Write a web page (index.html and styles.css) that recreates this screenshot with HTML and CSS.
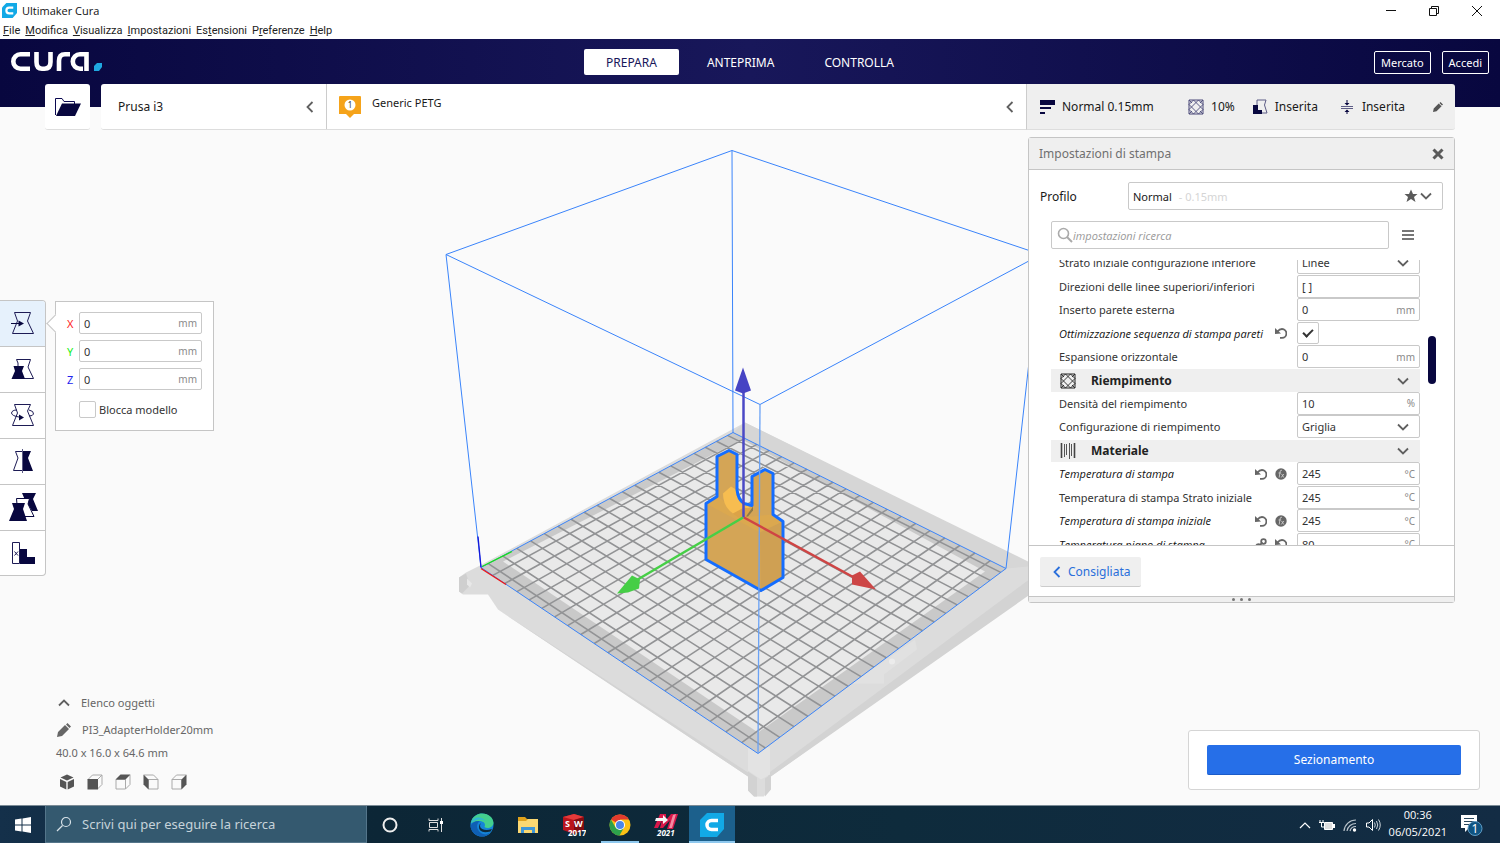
FILE: index.html
```html
<!DOCTYPE html>
<html lang="it">
<head>
    <meta charset="UTF-8">
    <meta name="viewport" content="width=device-width, initial-scale=1.0">
    <title>Ultimaker Cura</title>
    <link rel="stylesheet" href="styles.css">
</head>
<body>
    <!-- Shared icons -->
    <svg class="sprite" aria-hidden="true">
        <symbol id="i-cura" viewBox="0 0 24 24">
            <path d="M7 0H24V16L17 24H0V7Z" fill="#12a9e6"/>
            <path d="M18 7.500H11.500A4.500 4.500 0 0 0 11.500 16.500H18" fill="none" stroke="#fff" stroke-width="3.500"/>
        </symbol>
        <symbol id="i-down" viewBox="0 0 12 12"><path d="M1 3.500L6 8.500L11 3.500" fill="none" stroke="currentColor" stroke-width="1.800"/></symbol>
        <symbol id="i-left" viewBox="0 0 12 12"><path d="M8.500 1L3.500 6L8.500 11" fill="none" stroke="currentColor" stroke-width="1.800"/></symbol>
        <symbol id="i-undo" viewBox="0 0 12 12">
            <path d="M2.500 4.500Q4.500 2 7 2A4.300 4.300 0 0 1 7 10.800H5" fill="none" stroke="currentColor" stroke-width="1.800"/>
            <path d="M0 1V7L6 6.500Z" fill="currentColor"/>
        </symbol>
        <symbol id="i-fx" viewBox="0 0 12 12">
            <circle cx="6" cy="6" r="5.700" fill="currentColor"/>
            <path d="M7 2.200Q5.300 1.800 5 4L4.200 9.500M3.500 5H6.200M6.600 6L8.800 9.500M8.800 6L6.200 9.500" fill="none" stroke="#ccc" stroke-width="0.900"/>
        </symbol>
        <symbol id="i-link" viewBox="0 0 12 12">
            <g fill="none" stroke="currentColor" stroke-width="1.800"><circle cx="8.500" cy="3.500" r="2.300"/><circle cx="3.500" cy="8.500" r="2.300"/><path d="M4.500 7.500L7.500 4.500"/></g>
        </symbol>
        <symbol id="i-pencil" viewBox="0 0 14 14">
            <path d="M0 14L1 9L8 2L12 6L5 13ZM9 1.500L10.500 0L14 3.500L12.500 5Z" fill="currentColor"/>
        </symbol>
        <symbol id="i-infill" viewBox="0 0 16 16">
            <path d="M1 1H15V15H1Z" fill="none" stroke="currentColor"/>
            <path d="M1 5.500L5.500 1M1 10.500L10.500 1M5.500 15L15 5.500M10.500 15L15 10.500M10.500 1L15 5.500M5.500 1L15 10.500M1 5.500L10.500 15M1 10.500L5.500 15" fill="none" stroke="currentColor" stroke-width="0.900"/>
            <path d="M1 1L4 4M15 1L12 4M1 15L4 12M15 15L12 12" stroke="currentColor" stroke-width="0.900"/>
        </symbol>
        <symbol id="i-search" viewBox="0 0 16 16"><circle cx="6.500" cy="6.500" r="5" fill="none" stroke="currentColor" stroke-width="1.600"/><path d="M10 10L15 15" stroke="currentColor" stroke-width="2"/></symbol>
    </svg>

    <div class="titlebar">
        <svg class="app-icon"><use href="#i-cura"/></svg>
        <h1>Ultimaker Cura</h1>
        <div class="window-controls">
            <button type="button" aria-label="Riduci"><svg width="12" height="12"><path d="M1 5.500H11" stroke="#111"/></svg></button>
            <button type="button" aria-label="Ripristina"><svg width="12" height="12"><path d="M3.500 3.500V1.500H10.500V8.500H8.500M1.500 3.500H8.500V10.500H1.500Z" fill="none" stroke="#111"/></svg></button>
            <button type="button" aria-label="Chiudi"><svg width="12" height="12"><path d="M1 1L11 11M11 1L1 11" stroke="#111"/></svg></button>
        </div>
    </div>
    <nav class="menubar">
        <a href="#"><u>F</u>ile</a>
        <a href="#"><u>M</u>odifica</a>
        <a href="#"><u>V</u>isualizza</a>
        <a href="#"><u>I</u>mpostazioni</a>
        <a href="#">Es<u>t</u>ensioni</a>
        <a href="#">P<u>r</u>eferenze</a>
        <a href="#"><u>H</u>elp</a>
    </nav>

    <header class="topbar">
        <svg class="logo" width="92" height="20" viewBox="0 0 92 20" role="img" aria-label="cura">
            <g fill="none" stroke="#fff" stroke-width="4.600">
                <path d="M19 2.300H9.500A7 7 0 0 0 9.500 16.700H19"/>
                <path d="M25.500 0V10Q25.500 16.700 31 16.700H33.500Q39.500 16.700 39.500 10V0"/>
                <path d="M48 19V9Q48 2.300 54 2.300H59"/>
                <path d="M75.500 19V2.300H69A7 7 0 0 0 69 16.700H72"/>
            </g>
            <path d="M86 11H91V15L88 19H83V14Z" fill="#1fa8e0"/>
        </svg>
        <nav class="stages">
            <button type="button" class="active">PREPARA</button>
            <button type="button">ANTEPRIMA</button>
            <button type="button">CONTROLLA</button>
        </nav>
        <div class="account">
            <button type="button">Mercato</button>
            <button type="button">Accedi</button>
        </div>
    </header>

    <main>
        <svg class="scene" viewBox="0 84 1500 722" preserveAspectRatio="xMidYMid slice" aria-hidden="true">
            <!-- printer frame -->
            <path d="M480 566L745 423L1050 575V588L1018 600L768 779V790L764 797H754L748 791V777L498 610L488 595H463L459 592V578L466 573Z" fill="#dcdcdc"/>
            <path d="M498 610L748 773V777L495 608ZM768 774L1040 572V588L768 779Z" fill="#d3d3d3"/>
            <path d="M459 578L466 574L470 586L462 594L459 592Z" fill="#cfcfcf"/>
            <path d="M467 579L472 584L470 588L467 585Z" fill="#e8e8e8"/>
            <path d="M745 423L1028 562V567L1006 569L733 433Z" fill="#d6d6d6"/>
            <path d="M748 748H770V775L761 780L748 771Z" fill="#e3e3e3"/>
            <path d="M748 772L757 778V797H754L748 791ZM765 779L771 775V790L765 797Z" fill="#d2d2d2"/>
            <path d="M852 684L915 640L917 650L884 675V684Z" fill="#e1e1e1"/>
            <circle cx="892" cy="662" r="3" fill="#ececec"/>
            <path d="M481 568L733 433L1006 569L758 754Z" fill="#c9c9c9"/>
            <path d="M503 562L742 440L985 572L758 733Z" fill="#e9e9e9"/>
            <path id="grid" fill="none" stroke="#929395" stroke-width="1.600"/>

            <!-- build volume -->
            <g fill="none" stroke="#3a84fa">
                <path d="M481 568L733 433L1006 569L758 754Z"/>
                <path d="M446 255L732 151L1041 255L760 405Z"/>
                <path d="M481 568L446 255M733 433L732 151M1006 569L1041 255"/>
            </g>
            <path d="M481 569L506 585" stroke="#f01515" stroke-width="1.300"/>
            <path d="M482 567L512 552" stroke="#18e018" stroke-width="1.300"/>
            <path d="M481 568L478 537" stroke="#1515d8" stroke-width="1.300"/>

            <!-- model -->
            <path d="M706 560V504L718 497V457L729 451L736 455V490Q737 500 744 504L753 506V477L765 470L772 474V515L783 522V578L761 591Z" fill="#d4a556"/>
            <path d="M706 504L718 497L743 518L772 515L783 522L760 533Z" fill="#dba84f"/>
            <path d="M760 533L783 522V578L761 591Z" fill="#cfa053"/>
            <path d="M723 494L731 487L736 490Q739 501 750 508L733 514Q723 507 723 494Z" fill="#f7bd50"/>
            <path d="M733 514L744 508L753 510L746 518H738Z" fill="#dca347"/>
            <path d="M746 517L753 507V511L748 517Z" fill="#8f7a48"/>
            <path d="M706 560V504L717 497V457L729 451L737 455V490Q738 500 744 504L752 506V477L765 470L773 474V515L783 522V578L761 591Z" fill="none" stroke="#146dff" stroke-width="3" stroke-linejoin="round"/>
            <path d="M760 405L758 754" stroke="#6aa2f5" stroke-width="1.300"/>

            <!-- move handles -->
            <path d="M743.500 518V390" stroke="#4b49c6" stroke-width="2.500"/>
            <path d="M743 368L735 391L743 394L751 391Z" fill="#4644c4"/>
            <path d="M743 518L636 581" stroke="#46cf46" stroke-width="2.500"/>
            <path d="M617 594L632 576L640 580L639 589L628 593Z" fill="#46ce46"/>
            <path d="M744 518L854 578" stroke="#cf4444" stroke-width="2.500"/>
            <path d="M876 590L860 572L852 576V585Z" fill="#cd4646"/>
        </svg>

        <div class="stagebar">
            <button type="button" class="open" aria-label="Apri file">
                <svg width="28" height="20"><path d="M1.500 18V1.500H8L10 4.500H20.500V7" fill="none" stroke="#0a0850"/><path d="M8 6.500H27L21 19H2Z" fill="#08073f"/></svg>
            </button>
            <div class="stage-menu">
                <button type="button" class="printer"><span>Prusa i3</span><svg class="chev"><use href="#i-left"/></svg></button>
                <button type="button" class="material">
                    <svg width="24" height="24"><path d="M2 1H22Q23 1 23 2V19H16L12 23L8 19H1V2Q1 1 2 1Z" fill="#f5a31a"/><circle cx="12" cy="10" r="5.500" fill="#fff"/><text x="12" y="13" text-anchor="middle" class="badge-text">1</text></svg>
                    <span>Generic PETG</span>
                    <svg class="chev"><use href="#i-left"/></svg>
                </button>
                <button type="button" class="summary">
                    <svg width="16" height="16"><path d="M1 1H16V6H1ZM1 8H12V10H1ZM1 13H6V15H1Z" fill="#08073f"/></svg>
                    <span class="profile-name">Normal 0.15mm</span>
                    <svg class="navy" width="16" height="16"><use href="#i-infill"/></svg>
                    <span class="infill">10%</span>
                    <svg width="16" height="16"><path d="M5 1H14L12.500 6L15 14H10" fill="none" stroke="#5d5c86"/><path d="M5 1V6" stroke="#5d5c86"/><path d="M1 6H6V11H10V15H1Z" fill="#08073f"/></svg>
                    <span class="support">Inserita</span>
                    <svg width="16" height="16"><path d="M2 7.500H14M2 9.500H14" stroke="#5d5c86"/><path d="M8 1V5M8 11V15" stroke="#08073f"/><path d="M5.500 4H10.500L8 6.500ZM5.500 13H10.500L8 10.500Z" fill="#08073f"/></svg>
                    <span>Inserita</span>
                    <svg class="edit" width="10" height="10"><use href="#i-pencil"/></svg>
                </button>
            </div>
        </div>

        <div class="middle">
            <div class="tools">
                <button type="button" class="selected" aria-label="Sposta">
                    <svg width="24" height="24"><path d="M3.500 1.500H19.500L16.500 10L22.500 22.500H1.500L6.500 10Z" class="line"/><path d="M0 12.500H9" stroke="#08073f"/><path d="M7.500 9.500L13 12.500L7.500 15.500Z" class="solid"/></svg>
                </button>
                <button type="button" aria-label="Scala">
                    <svg width="24" height="24"><path d="M7 9V6L5.500 2.500H19.500L17 10L22.500 21.500H12" class="line"/><path d="M2.500 9H13L11 14L14 22H0.500L4 14Z" class="solid"/></svg>
                </button>
                <button type="button" aria-label="Ruota">
                    <svg width="24" height="24"><path d="M3.500 1.500H19.500L16.500 8L22.500 22.500H1.500L6.500 10Z" class="line"/><path d="M6 7Q1 7 0.500 10Q1 13 8 14M18 7Q23 8 22.500 11Q22 13 18 13" class="line"/><path d="M8 11.500L13 14.500L8 17.500Z" class="solid"/></svg>
                </button>
                <button type="button" aria-label="Specchia">
                    <svg width="24" height="24"><path d="M11 2.500H4.500L7 9L2.500 21.500H11" class="line"/><path d="M12 2H20L17 9L22 22H12Z" class="solid"/><path d="M11.500 0V24" stroke="#5d5c86"/></svg>
                </button>
                <button type="button" aria-label="Impostazioni per modello">
                    <svg width="30" height="30"><path d="M14 1H28L25 7L30 19H24L17 8Z" class="solid"/><path d="M8.500 6.500H21.500L20 12L26 24.500H10Z" fill="#fff" stroke="#08073f"/><path d="M4 11H17L15 17L19 29H1L6 17Z" class="solid"/></svg>
                </button>
                <button type="button" aria-label="Blocco supporto">
                    <svg width="24" height="24"><path d="M9 8H16V16H24V23H9Z" class="solid"/><path d="M1.500 1.500H8.500V22.500H1.500ZM3.500 10.500L7 14.500M7 10.500L3.500 14.500" class="line"/></svg>
                </button>
            </div>
            <form class="move-panel">
                <div class="axis x"><label for="pos-x">X</label><span class="field"><input id="pos-x" type="text" value="0"><span class="unit">mm</span></span></div>
                <div class="axis y"><label for="pos-y">Y</label><span class="field"><input id="pos-y" type="text" value="0"><span class="unit">mm</span></span></div>
                <div class="axis z"><label for="pos-z">Z</label><span class="field"><input id="pos-z" type="text" value="0"><span class="unit">mm</span></span></div>
                <div class="lock"><input id="lock" type="checkbox"><label for="lock">Blocca modello</label></div>
            </form>

            <section class="settings">
                <div class="settings-head">
                    <h2>Impostazioni di stampa</h2>
                    <button type="button" aria-label="Chiudi impostazioni"><svg width="12" height="12"><path d="M1.500 1.500L10.500 10.500M10.500 1.500L1.500 10.500" stroke="#5a5a5a" stroke-width="3"/></svg></button>
                </div>
                <div class="profile">
                    <span id="profile-label">Profilo</span>
                    <button type="button" class="profile-select" aria-labelledby="profile-label">
                        <span>Normal</span><span class="faint">- 0.15mm</span>
                        <svg class="star" width="14" height="14"><path d="M7 0.500L9 5H13.500L10 8L11.500 13L7 10L2.500 13L4 8L0.500 5H5Z" fill="#5a5a5a"/></svg>
                        <svg class="chev"><use href="#i-down"/></svg>
                    </button>
                </div>
                <div class="search">
                    <div class="search-box">
                        <svg width="16" height="16"><use href="#i-search"/></svg>
                        <input type="text" placeholder="impostazioni ricerca" aria-label="impostazioni ricerca">
                    </div>
                    <button type="button" aria-label="Visibilità impostazioni"><svg width="12" height="12"><path d="M0 2H12M0 6H12M0 10H12" stroke="#4a4a4a" stroke-width="1.500"/></svg></button>
                </div>
                <div class="list-wrap">
                    <div class="list">
                        <div class="row"><label for="s1">Strato iniziale configurazione inferiore</label><span class="field"><select id="s1"><option>Linee</option></select><svg class="chev"><use href="#i-down"/></svg></span></div>
                        <div class="row"><label for="s2">Direzioni delle linee superiori/inferiori</label><span class="field"><input id="s2" type="text" value="[ ]"></span></div>
                        <div class="row"><label for="s3">Inserto parete esterna</label><span class="field"><input id="s3" type="text" value="0"><span class="unit">mm</span></span></div>
                        <div class="row changed"><label for="s4">Ottimizzazione sequenza di stampa pareti</label><svg class="mark"><use href="#i-undo"/></svg><span class="check"><input id="s4" type="checkbox" checked></span></div>
                        <div class="row"><label for="s5">Espansione orizzontale</label><span class="field"><input id="s5" type="text" value="0"><span class="unit">mm</span></span></div>
                        <button type="button" class="category"><svg width="16" height="16"><use href="#i-infill"/></svg><span>Riempimento</span><svg class="chev"><use href="#i-down"/></svg></button>
                        <div class="row"><label for="s6">Densità del riempimento</label><span class="field"><input id="s6" type="text" value="10"><span class="unit">%</span></span></div>
                        <div class="row"><label for="s7">Configurazione di riempimento</label><span class="field"><select id="s7"><option>Griglia</option></select><svg class="chev"><use href="#i-down"/></svg></span></div>
                        <button type="button" class="category"><svg width="16" height="16"><path d="M1.500 0V15M14.500 0V15" stroke="#444" stroke-width="1.600"/><path d="M4.500 1V14M6.500 1V12M9.500 0V16M11.500 1V13" stroke="#555"/></svg><span>Materiale</span><svg class="chev"><use href="#i-down"/></svg></button>
                        <div class="row changed"><label for="s8">Temperatura di stampa</label><svg class="mark"><use href="#i-undo"/></svg><svg class="mark"><use href="#i-fx"/></svg><span class="field"><input id="s8" type="text" value="245"><span class="unit">°C</span></span></div>
                        <div class="row"><label for="s9">Temperatura di stampa Strato iniziale</label><span class="field"><input id="s9" type="text" value="245"><span class="unit">°C</span></span></div>
                        <div class="row changed"><label for="s10">Temperatura di stampa iniziale</label><svg class="mark"><use href="#i-undo"/></svg><svg class="mark"><use href="#i-fx"/></svg><span class="field"><input id="s10" type="text" value="245"><span class="unit">°C</span></span></div>
                        <div class="row changed"><label for="s11">Temperatura piano di stampa</label><svg class="mark"><use href="#i-link"/></svg><svg class="mark"><use href="#i-undo"/></svg><span class="field"><input id="s11" type="text" value="80"><span class="unit">°C</span></span></div>
                    </div>
                    <div class="scroll-thumb"></div>
                </div>
                <div class="settings-foot">
                    <button type="button"><svg class="chev"><use href="#i-left"/></svg>Consigliata</button>
                </div>
                <div class="drag"><i></i><i></i><i></i></div>
            </section>
        </div>

        <div class="bottom">
            <div class="objects">
                <button type="button" class="toggle"><svg class="chev up"><use href="#i-down"/></svg>Elenco oggetti</button>
                <div class="object-name"><svg width="14" height="14"><use href="#i-pencil"/></svg><span>PI3_AdapterHolder20mm</span></div>
                <p>40.0 x 16.0 x 64.6 mm</p>
                <div class="views">
                    <button type="button" aria-label="Vista 3D"><svg width="16" height="16"><path d="M8 0.500L14.500 3.500L8 6.500L1.500 3.500ZM1 5L7.300 8V15.500L1 12.500ZM15 5L8.700 8V15.500L15 12.500Z" fill="#555"/></svg></button>
                    <button type="button" aria-label="Vista frontale"><svg width="16" height="16"><path d="M1 5.500L5.500 1H15V10.500L10.500 15M10.500 5.500L15 1" class="cube"/><path d="M0.500 5H11V15.500H0.500Z" fill="#555"/></svg></button>
                    <button type="button" aria-label="Vista superiore"><svg width="16" height="16"><path d="M1 5.500H10.500V15H1ZM15 1V10.500L10.500 15" class="cube"/><path d="M0.500 5.500L5.500 0.500H15.500L10.500 5.500Z" fill="#555"/></svg></button>
                    <button type="button" aria-label="Vista sinistra"><svg width="16" height="16"><path d="M5.500 5.500H15V15H5.500ZM1 1H10.500L15 5.500" class="cube"/><path d="M0.500 0.500L5.500 5.500V15.500L0.500 10.500Z" fill="#555"/></svg></button>
                    <button type="button" aria-label="Vista destra"><svg width="16" height="16"><path d="M1 5.500H10.500V15H1ZM1 5.500L5.500 1H15" class="cube"/><path d="M10.500 5.500L15.500 0.500V10.500L10.500 15.500Z" fill="#555"/></svg></button>
                </div>
            </div>
            <div class="action-card"><button type="button">Sezionamento</button></div>
        </div>
    </main>

    <footer class="taskbar">
        <button type="button" class="start" aria-label="Start"><svg width="16" height="16"><path d="M0 2.500L6.500 1.500V7.500H0ZM7.500 1.400L16 0V7.500H7.500ZM0 8.500H6.500V14.500L0 13.500ZM7.500 8.500H16V16L7.500 14.600Z" fill="#fff"/></svg></button>
        <div class="task-search">
            <svg width="16" height="16"><circle cx="10" cy="6" r="4.500" fill="none" stroke="#d8e2e8" stroke-width="1.200"/><path d="M6.500 9.500L1 15" stroke="#d8e2e8" stroke-width="1.200"/></svg>
            <input type="text" placeholder="Scrivi qui per eseguire la ricerca" aria-label="Scrivi qui per eseguire la ricerca">
        </div>
        <div class="apps">
            <button type="button" aria-label="Cortana"><svg width="16" height="16"><circle cx="8" cy="8" r="6.500" fill="none" stroke="#eee" stroke-width="2"/></svg></button>
            <button type="button" aria-label="Visualizzazione attività"><svg width="16" height="16"><path d="M1 1.500V3.500H10V1.500M1 14.500V12.500H10V14.500M1.500 5.500H9.500V10.500H1.500ZM13.500 1V15" fill="none" stroke="#ddd"/><rect x="12" y="4" width="3" height="3" fill="#fff"/></svg></button>
            <button type="button" aria-label="Edge"><svg width="24" height="24"><circle cx="12" cy="12" r="11.500" fill="#1584d8"/><path d="M1 10C2 3 8 0.500 12 0.500C19 0.500 23.500 5 23.500 10C23 15 17 16 14.500 14C17 8 9 6 1 10Z" fill="#43cf8e"/><path d="M1 10C4 2 13 4 15 8C9 5 5 7 1 10Z" fill="#2fb5d8"/><path d="M10 8C4 12 8 21 16 21.500L20 19.500Q17 23.500 12 23.500C4 23 0.500 17 0.500 13C2 9 6 7.500 10 8Z" fill="#0f5fb4"/><path d="M11 10C8 14 12 19 22 16L20.500 18.500Q9 21 9 14Q9 11 11 10Z" fill="#0d2a3c"/></svg></button>
            <button type="button" aria-label="Esplora file"><svg width="22" height="20"><path d="M1 2H8L10 4H21V18H1Z" fill="#e0a21c"/><path d="M1 6H9L11 4H21V18H1Z" fill="#fbd872"/><path d="M4 18V12H18V18H15V15H7V18Z" fill="#3f97d8"/></svg></button>
            <button type="button" aria-label="SolidWorks 2017"><svg width="24" height="24"><path d="M1 4L12 1L22 4V17L12 21L1 17Z" fill="#b9141c"/><path d="M1 4L12 1L22 4L12 7Z" fill="#e53a3a"/><path d="M12 7L22 4V17L12 21Z" fill="#7f0c12"/><text x="3" y="14" class="sw">S</text><text x="12" y="14" class="sw">W</text><text x="6" y="23" class="year">2017</text></svg></button>
            <button type="button" class="running" aria-label="Chrome"><svg width="24" height="24"><circle cx="12" cy="12" r="10.500" fill="#fbc116"/><path d="M12 12L3 6.600A10.500 10.500 0 0 1 21 6.600H12Z" fill="#e33b2e"/><path d="M12 12L7.500 14.600L3 6.600A10.500 10.500 0 0 0 11.500 22.500L16 14.600Z" fill="#2da14c"/><circle cx="12" cy="12" r="5" fill="#fff"/><circle cx="12" cy="12" r="4" fill="#4a86ea"/></svg></button>
            <button type="button" aria-label="Mastercam 2021"><svg width="24" height="24"><path d="M0 15L6 1H12L12 7L17 1H24L19 16H13L16 7L9 15H6L8 7L4 15Z" fill="#d8174a"/><path d="M2 5H9V2L14 7L9 11V8H1Z" fill="#f5f5f5"/><path d="M19 2L22 1L18 15H15Z" fill="#f58aa2"/><text x="3" y="23" class="year italic">2021</text></svg></button>
            <button type="button" class="current" aria-label="Ultimaker Cura"><svg width="24" height="24"><use href="#i-cura"/></svg></button>
        </div>
        <div class="tray">
            <svg width="12" height="12"><path d="M1 9L6 4L11 9" fill="none" stroke="#fff" stroke-width="1.200"/></svg>
            <svg width="16" height="12"><path d="M1 1V3M4 1V3M0 3.500H5M2.500 4V8H5" fill="none" stroke="#fff"/><path d="M5.500 3.500H13.500V10.500H5.500Z" fill="#ddd" stroke="#fff"/><path d="M15 5V9" stroke="#fff" stroke-width="2"/></svg>
            <svg width="14" height="14"><path d="M1 13A12 12 0 0 1 13 2M4 13A9 9 0 0 1 13 5.500M7 13A6 6 0 0 1 13 8.500" fill="none" stroke="#b8c2ca" stroke-width="1.200"/><circle cx="11.500" cy="12" r="1.700" fill="#fff"/></svg>
            <svg width="16" height="14"><path d="M1.500 5H4L7.500 1.500V12.500L4 9H1.500Z" fill="none" stroke="#fff"/><path d="M9.500 4.500Q11 7 9.500 9.500M11.500 3Q14 7 11.500 11M13.500 1.500Q17 7 13.500 12.500" fill="none" stroke="#ccd4da"/></svg>
            <div class="clock"><time>00:36</time><time>06/05/2021</time></div>
            <button type="button" aria-label="Notifiche"><svg width="24" height="24"><path d="M1 2H17V15H9L5 19V15H1Z" fill="#fff"/><path d="M4 5.500H14M4 8.500H14M4 11.500H10" stroke="#29465c"/><circle cx="15" cy="15.500" r="7" fill="#0f5482" stroke="#5f9cc4"/><text x="15" y="20" text-anchor="middle" class="count">1</text></svg></button>
        </div>
    </footer>
    <script src="scene.js"></script>
</body>
</html>
```
FILE: styles.css
```css
* {
    box-sizing: border-box;
}
body {
    margin: 0;
    min-height: 100vh;
    display: flex;
    flex-direction: column;
    font-family: "Noto Sans", "Open Sans", sans-serif;
    font-size: 11px;
    color: #333;
    background: #fafafa;
    overflow: hidden;
}
button {
    font: inherit;
    color: inherit;
    background: none;
    border: none;
    padding: 0;
    display: flex;
    align-items: center;
    justify-content: center;
    cursor: pointer;
}
input, select {
    font: inherit;
    color: inherit;
    min-width: 0;
    padding: 0;
    border: none;
    outline: none;
    background: transparent;
}
h1, h2, p {
    margin: 0;
    font-weight: normal;
}
svg {
    flex: none;
    display: block;
}
.sprite {
    position: absolute;
    width: 0;
    height: 0;
}
.chev {
    width: 12px;
    height: 12px;
    color: #606060;
}
.chev.up {
    transform: rotate(180deg);
}

/* Window title and menu */
.titlebar {
    display: flex;
    align-items: center;
    height: 21px;
    padding: 0 2px;
    background: #fff;
}
.app-icon {
    width: 15px;
    height: 15px;
}
.titlebar h1 {
    flex: 1;
    margin-left: 5px;
    font-family: "Open Sans", sans-serif;
    font-size: 11px;
    color: #111;
}
.window-controls {
    display: flex;
}
.window-controls button {
    width: 43px;
    height: 20px;
}
.menubar {
    display: flex;
    gap: 5px;
    height: 18px;
    padding: 0 3px;
    line-height: 20px;
    background: #fff;
    font-family: Roboto, sans-serif;
}
.menubar a {
    color: #222;
    text-decoration: none;
}

/* Stage header */
.topbar {
    display: grid;
    grid-template-columns: 1fr auto 1fr;
    align-items: center;
    height: 45px;
    padding: 1px 11px 0;
    background: linear-gradient(90deg, #08073f, #18175a 50%, #08073f);
}
.stages {
    display: flex;
    gap: 6px;
}
.stages button {
    height: 26px;
    padding: 0 22px;
    font-size: 12px;
    color: #fff;
    border-radius: 2px;
}
.stages .active {
    background: #fff;
    color: #18175a;
}
.account {
    display: flex;
    justify-content: flex-end;
    gap: 11px;
}
.account button {
    height: 23px;
    padding: 0 6px;
    color: #fff;
    border: 1px solid #fff;
    border-radius: 2px;
}

main {
    flex: 1;
    position: relative;
    display: flex;
    flex-direction: column;
    background: linear-gradient(90deg, #08073f, #18175a 50%, #08073f) 0 0 / 100% 23px no-repeat, #fafafa;
}
.scene {
    position: absolute;
    top: 0;
    left: 0;
    width: 100%;
    height: 100%;
}
.stagebar, .middle, .bottom {
    position: relative; /* above the scene */
}
.stagebar {
    display: flex;
    gap: 11px;
    height: 46px;
    margin: 0 45px;
}
.open {
    width: 45px;
    background: #fff;
    border-bottom: 1px solid #ddd;
    border-radius: 3px;
}
.stage-menu {
    flex: 1;
    display: flex;
    font-size: 12px;
    color: #191919;
}
.stage-menu > button {
    background: #fff;
    border-bottom: 1px solid #ddd;
}
.printer {
    width: 226px;
    padding: 0 10px 0 17px;
    justify-content: space-between;
    border-right: 1px solid #ccc;
    border-radius: 3px 0 0 3px;
}
.stage-menu .material {
    flex: 1;
    padding: 0 10px 0 11px;
    font-size: 11px;
    border-right: 1px solid #ccc;
}
.material span {
    align-self: flex-start;
    margin: 11px auto 0 10px;
}
.badge-text {
    font-size: 8px;
    fill: #333;
}
.stage-menu .summary {
    width: 428px;
    padding: 0 12px;
    background: #efefef;
    border-radius: 0 3px 3px 0;
    text-align: left;
}
.summary span {
    margin-left: 7px;
}
.summary .profile-name {
    flex: 1;
}
.navy {
    color: #4a4978;
}
.summary .infill {
    margin-right: 17px;
}
.summary .support {
    margin-right: 21px;
}
.summary .edit {
    margin-left: 28px;
    color: #555;
}

/* Tools */
.middle {
    flex: 1;
    display: flex;
    align-items: flex-start;
    padding-right: 45px;
}
.tools {
    width: 46px;
    margin-top: 170px;
    background: #fff;
    border: 1px solid #c5c5c5;
    border-left: none;
    border-radius: 0 4px 4px 0;
    overflow: hidden;
}
.tools button {
    width: 100%;
    height: 46px;
    padding-bottom: 1px;
    border-bottom: 1px solid #c5c5c5;
}
.tools button:last-child {
    height: 44px;
    border-bottom: none;
}
.tools .selected {
    background: #e6f1fc;
}
.line {
    fill: none;
    stroke: #1d1b55;
}
.solid {
    fill: #08073f;
}
.move-panel {
    position: relative;
    display: flex;
    flex-direction: column;
    gap: 6px;
    width: 159px;
    height: 130px;
    margin: 171px 0 0 9px;
    padding: 10px 11px;
    background: #fff;
    border: 1px solid #c5c5c5;
}
.move-panel::before {
    content: "";
    position: absolute;
    left: -7px;
    top: 15px;
    width: 12px;
    height: 12px;
    background: #fff;
    border: 1px solid #c5c5c5;
    border-width: 0 0 1px 1px;
    transform: rotate(45deg);
}
.axis {
    display: flex;
    align-items: center;
}
.axis label {
    width: 12px;
}
.x label { color: #f22; }
.y label { color: #2e2; }
.z label { color: #22e; }
.field {
    display: flex;
    align-items: center;
    flex: 1;
    height: 22px;
    padding: 0 4px;
    background: #fff;
    border: 1px solid #c9c9c9;
    border-radius: 2px;
}
.field input, .field select {
    flex: 1;
    width: 0;
    appearance: none;
}
.unit {
    font-size: 10px;
    color: #8a8a8a;
}
.lock {
    display: flex;
    align-items: center;
    gap: 3px;
    margin: 5px 0 0 12px;
}
.lock input {
    appearance: none;
    width: 17px;
    height: 17px;
    margin: 0;
    border: 1px solid #c9c9c9;
    border-radius: 2px;
}

/* Print settings */
.settings {
    width: 427px;
    margin: 7px 0 0 auto;
    background: #fff;
    border: 1px solid #c5c5c5;
    border-radius: 3px;
}
.settings-head {
    display: flex;
    align-items: center;
    justify-content: space-between;
    height: 32px;
    padding: 0 10px;
    background: #efefef;
    border-bottom: 1px solid #c5c5c5;
}
.settings-head h2 {
    font-size: 12px;
    color: #707070;
}
.profile {
    display: flex;
    align-items: center;
    justify-content: space-between;
    margin: 12px 11px 11px;
    font-size: 12px;
    color: #191919;
}
.profile-select {
    width: 315px;
    height: 28px;
    padding: 0 10px 0 4px;
    gap: 7px;
    font-size: 11px;
    border: 1px solid #c9c9c9;
    border-radius: 2px;
}
.profile-select .star {
    margin-left: auto;
}
.profile-select .chev {
    margin-left: -5px;
}
.faint {
    color: #d5d5d5;
}
.search {
    display: flex;
    align-items: center;
    gap: 13px;
    margin: 0 40px 11px 22px;
}
.search-box {
    flex: 1;
    display: flex;
    align-items: center;
    height: 28px;
    padding: 0 5px;
    border: 1px solid #c9c9c9;
    border-radius: 2px;
    color: #aaa;
}
.search-box input {
    flex: 1;
    font-family: "Open Sans", sans-serif;
    font-style: italic;
}
.search-box input::placeholder {
    color: #999;
}
.list-wrap {
    position: relative;
    height: 286px;
    padding: 0 34px 0 22px;
    overflow: hidden;
    border-bottom: 1px solid #c5c5c5;
}
.list {
    display: grid;
    grid-auto-rows: 1fr;
    height: 305px;
    margin-top: -9px; /* scrolled position */
}
.row {
    display: flex;
    align-items: center;
    padding-left: 8px;
}
.row label {
    flex: 1;
    white-space: nowrap;
}
.changed label {
    font-family: "Open Sans", sans-serif;
    font-style: italic;
    color: #111;
}
.row .field, .check {
    flex: none;
    width: 123px;
    height: 23px;
    margin-left: 10px;
    padding: 0 4px;
}
.mark {
    width: 12px;
    height: 12px;
    margin-left: 8px;
    color: #666;
}
.row .chev, .category .chev {
    margin-right: 6px;
}
.row .check {
    padding: 0;
}
.check input {
    appearance: none;
    display: flex;
    align-items: center;
    justify-content: center;
    width: 22px;
    height: 22px;
    margin: 0;
    border: 1px solid #c9c9c9;
    border-radius: 2px;
}
.check input:checked::after {
    content: "";
    width: 8px;
    height: 4px;
    margin-bottom: 2px;
    border: solid #333;
    border-width: 0 0 2px 2px;
    transform: rotate(-45deg);
}
.category {
    padding: 0 5px 0 9px;
    background: #efefef;
    font-size: 12px;
    font-weight: bold;
    color: #222;
    margin-top: 1px;
}
.category span {
    flex: 1;
    margin-left: 15px;
    text-align: left;
}
.scroll-thumb {
    position: absolute;
    right: 18px;
    top: 76px;
    width: 8px;
    height: 48px;
    border-radius: 4px;
    background: #08073f;
}
.settings-foot {
    height: 50px;
    padding: 11px;
}
.settings-foot button {
    height: 30px;
    gap: 5px;
    padding: 0 11px;
    background: #efefef;
    border-bottom: 1px solid #ccc;
    border-radius: 2px;
    font-size: 12px;
    color: #2a6fdb;
}
.settings-foot .chev {
    color: #2a6fdb;
}
.drag {
    display: flex;
    align-items: center;
    justify-content: center;
    gap: 5px;
    height: 6px;
    background: #efefef;
    border-top: 1px solid #c5c5c5;
}
.drag i {
    width: 3px;
    height: 3px;
    border-radius: 50%;
    background: #777;
}

/* Object list and slice button */
.bottom {
    display: flex;
    align-items: flex-end;
    justify-content: space-between;
    padding: 0 20px 15px 56px;
}
.objects {
    display: flex;
    flex-direction: column;
    align-items: flex-start;
    color: #666;
}
.toggle {
    gap: 11px;
    padding-left: 2px;
}
.object-name {
    display: flex;
    align-items: center;
    gap: 11px;
    margin: 12px 0 8px 1px;
}
.views {
    display: flex;
    gap: 12px;
    margin: 14px 0 0 3px;
}
.cube {
    fill: none;
    stroke: #aaa;
}
.action-card {
    width: 292px;
    padding: 14px 18px;
    background: #fff;
    border: 1px solid #d5d5d5;
    border-radius: 3px;
}
.action-card button {
    width: 100%;
    height: 30px;
    font-size: 12px;
    color: #fff;
    background: #266fe8;
    border-bottom: 1px solid #1b5bc8;
    border-radius: 2px;
}

/* Windows taskbar */
.taskbar {
    display: flex;
    height: 38px;
    background: linear-gradient(90deg, #14304a, #0c2636 25%, #0e2b3c 60%, #132c44);
    border-top: 1px solid #7b8b96;
    color: #fff;
}
.start {
    width: 45px;
}
.task-search {
    display: flex;
    align-items: center;
    gap: 10px;
    width: 322px;
    padding: 0 10px;
    background: #34596f;
    border: 1px solid #54758a;
    border-top: none;
}
.task-search input {
    flex: 1;
    font-size: 13px;
}
.task-search input::placeholder {
    color: #c6d3da;
}
.apps {
    display: flex;
}
.apps button {
    width: 46px;
}
.apps .running {
    border-bottom: 2px solid #8ec8ee;
    border-top: 2px solid transparent;
    width: 38px;
    margin: 0 4px;
}
.apps .current {
    background: #1c608c;
    border-bottom: 2px solid #8ec8ee;
    border-top: 2px solid #1c608c;
}
.sw {
    font-size: 9px;
    font-weight: bold;
    fill: #fff;
}
.year {
    font-size: 8px;
    font-weight: bold;
    fill: #fff;
}
.italic {
    font-style: italic;
}
.tray {
    display: flex;
    align-items: center;
    gap: 8px;
    margin-left: auto;
    padding-right: 16px;
}
.clock {
    display: flex;
    flex-direction: column;
    align-items: center;
    padding-bottom: 3px;
    line-height: 17px;
    font-family: "Open Sans", sans-serif;
}
.tray button {
    margin-left: 5px;
}
.count {
    font-size: 12px;
    fill: #fff;
}
```
FILE: scene.js
```js
// Draws the build plate grid in perspective between the four plate corners.
const corners = [[481, 568], [733, 433], [1006, 569], [758, 754]];
const cells = 20;

function projector([[x0, y0], [x1, y1], [x2, y2], [x3, y3]]) {
    const dx1 = x1 - x2, dx2 = x3 - x2, sx = x0 - x1 + x2 - x3;
    const dy1 = y1 - y2, dy2 = y3 - y2, sy = y0 - y1 + y2 - y3;
    const det = dx1 * dy2 - dx2 * dy1;
    const g = (sx * dy2 - dx2 * sy) / det;
    const h = (dx1 * sy - sx * dy1) / det;
    return (u, v) => {
        const w = g * u + h * v + 1;
        const x = ((x1 - x0 + g * x1) * u + (x3 - x0 + h * x3) * v + x0) / w;
        const y = ((y1 - y0 + g * y1) * u + (y3 - y0 + h * y3) * v + y0) / w;
        return `${x.toFixed(1)} ${y.toFixed(1)}`;
    };
}

const project = projector(corners);
let d = '';
for (let i = 1; i < cells; i++) {
    const t = i / cells;
    d += `M${project(0, t)}L${project(1, t)}`;
}
for (let i = 0; i < cells; i++) {
    const t = (i + 0.5) / cells;
    d += `M${project(t, 0)}L${project(t, 1)}`;
}
document.getElementById('grid').setAttribute('d', d);
```
